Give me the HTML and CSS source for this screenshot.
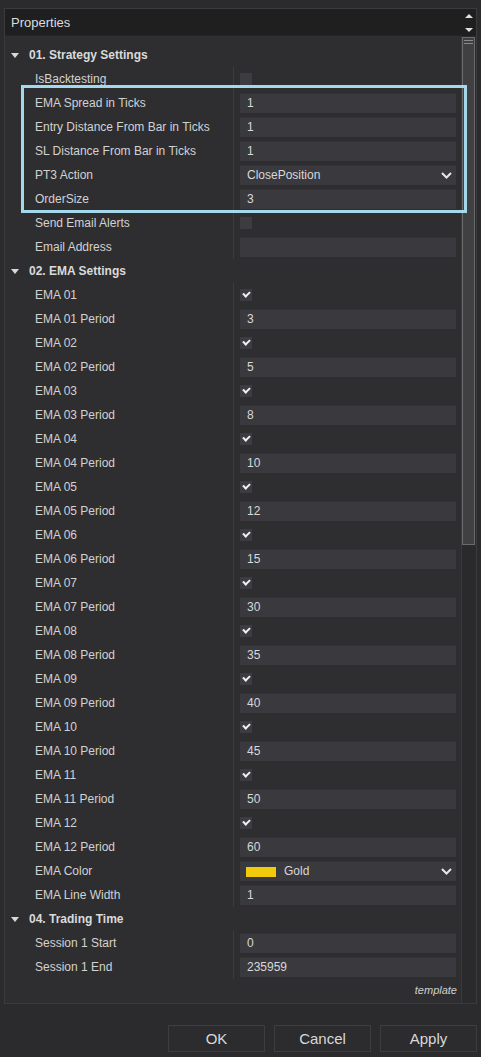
FILE: index.html
```html
<!DOCTYPE html>
<html>
<head>
<meta charset="utf-8">
<link rel="stylesheet" href="styles.css">
</head>
<body>
<div class="dialog">
  <div class="panel">
    <div class="main">
      <div class="titlebar">Properties</div>
      <div class="grid">
        <div class="section"><span class="tri"></span>01. Strategy Settings</div>
        <div class="row"><div class="label">IsBacktesting</div><div class="val"><span class="chk"></span></div></div>
        <div class="row"><div class="label">EMA Spread in Ticks</div><div class="val"><div class="box">1</div></div></div>
        <div class="row"><div class="label">Entry Distance From Bar in Ticks</div><div class="val"><div class="box">1</div></div></div>
        <div class="row"><div class="label">SL Distance From Bar in Ticks</div><div class="val"><div class="box">1</div></div></div>
        <div class="row"><div class="label">PT3 Action</div><div class="val"><div class="box select">ClosePosition<svg class="chev" width="11" height="7" viewBox="0 0 11 7"><path d="M1 1 L5.5 5.5 L10 1" fill="none" stroke="#e6e6e6" stroke-width="2"/></svg></div></div></div>
        <div class="row"><div class="label">OrderSize</div><div class="val"><div class="box">3</div></div></div>
        <div class="row"><div class="label">Send Email Alerts</div><div class="val"><span class="chk"></span></div></div>
        <div class="row"><div class="label">Email Address</div><div class="val"><div class="box"></div></div></div>

        <div class="section"><span class="tri"></span>02. EMA Settings</div>
        <div class="row"><div class="label">EMA 01</div><div class="val"><span class="chk on"></span></div></div>
        <div class="row"><div class="label">EMA 01 Period</div><div class="val"><div class="box">3</div></div></div>
        <div class="row"><div class="label">EMA 02</div><div class="val"><span class="chk on"></span></div></div>
        <div class="row"><div class="label">EMA 02 Period</div><div class="val"><div class="box">5</div></div></div>
        <div class="row"><div class="label">EMA 03</div><div class="val"><span class="chk on"></span></div></div>
        <div class="row"><div class="label">EMA 03 Period</div><div class="val"><div class="box">8</div></div></div>
        <div class="row"><div class="label">EMA 04</div><div class="val"><span class="chk on"></span></div></div>
        <div class="row"><div class="label">EMA 04 Period</div><div class="val"><div class="box">10</div></div></div>
        <div class="row"><div class="label">EMA 05</div><div class="val"><span class="chk on"></span></div></div>
        <div class="row"><div class="label">EMA 05 Period</div><div class="val"><div class="box">12</div></div></div>
        <div class="row"><div class="label">EMA 06</div><div class="val"><span class="chk on"></span></div></div>
        <div class="row"><div class="label">EMA 06 Period</div><div class="val"><div class="box">15</div></div></div>
        <div class="row"><div class="label">EMA 07</div><div class="val"><span class="chk on"></span></div></div>
        <div class="row"><div class="label">EMA 07 Period</div><div class="val"><div class="box">30</div></div></div>
        <div class="row"><div class="label">EMA 08</div><div class="val"><span class="chk on"></span></div></div>
        <div class="row"><div class="label">EMA 08 Period</div><div class="val"><div class="box">35</div></div></div>
        <div class="row"><div class="label">EMA 09</div><div class="val"><span class="chk on"></span></div></div>
        <div class="row"><div class="label">EMA 09 Period</div><div class="val"><div class="box">40</div></div></div>
        <div class="row"><div class="label">EMA 10</div><div class="val"><span class="chk on"></span></div></div>
        <div class="row"><div class="label">EMA 10 Period</div><div class="val"><div class="box">45</div></div></div>
        <div class="row"><div class="label">EMA 11</div><div class="val"><span class="chk on"></span></div></div>
        <div class="row"><div class="label">EMA 11 Period</div><div class="val"><div class="box">50</div></div></div>
        <div class="row"><div class="label">EMA 12</div><div class="val"><span class="chk on"></span></div></div>
        <div class="row"><div class="label">EMA 12 Period</div><div class="val"><div class="box">60</div></div></div>
        <div class="row"><div class="label">EMA Color</div><div class="val"><div class="box select"><span class="swatch"></span>Gold<svg class="chev" width="11" height="7" viewBox="0 0 11 7"><path d="M1 1 L5.5 5.5 L10 1" fill="none" stroke="#e6e6e6" stroke-width="2"/></svg></div></div></div>
        <div class="row"><div class="label">EMA Line Width</div><div class="val"><div class="box">1</div></div></div>

        <div class="section"><span class="tri"></span>04. Trading Time</div>
        <div class="row"><div class="label">Session 1 Start</div><div class="val"><div class="box">0</div></div></div>
        <div class="row"><div class="label">Session 1 End</div><div class="val"><div class="box">235959</div></div></div>
      </div>
      <div class="template">template</div>
    </div>
    <div class="scrollcol">
      <div class="arrows">
        <span class="up"></span>
        <span class="down"></span>
      </div>
      <div class="track">
        <div class="thumb"><span class="grip"></span><span class="grip"></span></div>
      </div>
    </div>
    <div class="highlight"></div>
  </div>
  <div class="buttons">
    <button class="btn">OK</button>
    <button class="btn">Cancel</button>
    <button class="btn">Apply</button>
  </div>
</div>
</body>
</html>
```

FILE: styles.css
```css
html, body {
  margin: 0;
  padding: 0;
  background: #2b2b2d;
  font-family: "Liberation Sans", Arial, sans-serif;
  color: #d6d6d6;
}

.dialog {
  width: 481px;
  height: 1057px;
  padding: 8px 4px 0 4px;
  box-sizing: border-box;
}

.panel {
  position: relative;
  display: flex;
  height: 996px;
  border: 1px solid #3b3b3d;
  background: #2e2e30;
  box-sizing: border-box;
}

.main {
  flex: 1;
  display: flex;
  flex-direction: column;
}

.titlebar {
  height: 27px;
  line-height: 28px;
  background: #1f1f20;
  padding-left: 6px;
  font-size: 13px;
  color: #dcdcdc;
  border-bottom: 1px solid #252527;
  box-sizing: border-box;
}

.grid {
  padding-top: 7px;
}

.section {
  height: 24px;
  display: flex;
  align-items: center;
  font-size: 12px;
  font-weight: bold;
  color: #dadada;
}

.tri {
  width: 0;
  height: 0;
  border-left: 4px solid transparent;
  border-right: 4px solid transparent;
  border-top: 5px solid #d8d8d8;
  margin-left: 6px;
  margin-right: 10px;
}

.row {
  height: 24px;
  display: flex;
}

.label {
  width: 229px;
  padding-left: 30px;
  box-sizing: border-box;
  font-size: 12px;
  line-height: 24px;
  color: #d2d2d2;
  border-right: 1px solid #3c3c3f;
  white-space: nowrap;
}

.val {
  flex: 1;
  display: flex;
  align-items: center;
  padding-left: 6px;
  padding-right: 5px;
}

.box {
  flex: 1;
  height: 20px;
  background: #3a393e;
  border-top: 1px solid #333236;
  box-sizing: border-box;
  font-size: 12px;
  line-height: 19px;
  padding-left: 7px;
  color: #d8d8d8;
  display: flex;
  align-items: center;
}

.select {
  position: relative;
}

.chev {
  margin-left: auto;
  margin-right: 4px;
}

.swatch {
  width: 30px;
  height: 10px;
  background: #f2cc0c;
  margin-left: -1px;
  margin-right: 8px;
}

.chk {
  width: 12px;
  height: 12px;
  background: #3d3c41;
  position: relative;
}

.chk.on::after {
  content: "";
  position: absolute;
  left: 3px;
  top: 2px;
  width: 5px;
  height: 3px;
  border-left: 2px solid #f0f0f0;
  border-bottom: 2px solid #f0f0f0;
  transform: rotate(-45deg);
}

.template {
  margin-top: auto;
  text-align: right;
  padding-right: 4px;
  padding-bottom: 7px;
  font-size: 11px;
  font-style: italic;
  color: #cfcfcf;
}

.scrollcol {
  width: 15px;
  display: flex;
  flex-direction: column;
  background: #2a2a2c;
}

.arrows {
  height: 27px;
  background: #1f1f20;
  display: flex;
  flex-direction: column;
  align-items: center;
  justify-content: center;
  gap: 10px;
}

.up {
  width: 0;
  height: 0;
  border-left: 4px solid transparent;
  border-right: 4px solid transparent;
  border-bottom: 4px solid #e0e0e0;
}

.down {
  width: 0;
  height: 0;
  border-left: 4px solid transparent;
  border-right: 4px solid transparent;
  border-top: 4px solid #e0e0e0;
}

.track {
  flex: 1;
  border-left: 1px solid #3a3a3c;
  padding-top: 1px;
}

.thumb {
  height: 508px;
  margin-right: 1px;
  background: #404042;
  border: 1px solid #6b6b6d;
  box-sizing: border-box;
  display: flex;
  flex-direction: column;
  align-items: center;
  padding-top: 2px;
  gap: 2px;
}

.grip {
  width: 9px;
  height: 1px;
  background: #8a8a8c;
}

.highlight {
  position: absolute;
  left: 16px;
  top: 76px;
  width: 446px;
  height: 128px;
  border: 3px solid #a3d9ea;
  box-sizing: border-box;
  pointer-events: none;
}

.buttons {
  display: flex;
  justify-content: flex-end;
  gap: 9px;
  margin-top: 21px;
}

.btn {
  width: 97px;
  height: 27px;
  background: #2c2c2e;
  border: 1px solid #3d3d3f;
  color: #d8d8d8;
  font-family: "Liberation Sans", Arial, sans-serif;
  font-size: 15px;
  padding: 0;
}
```
